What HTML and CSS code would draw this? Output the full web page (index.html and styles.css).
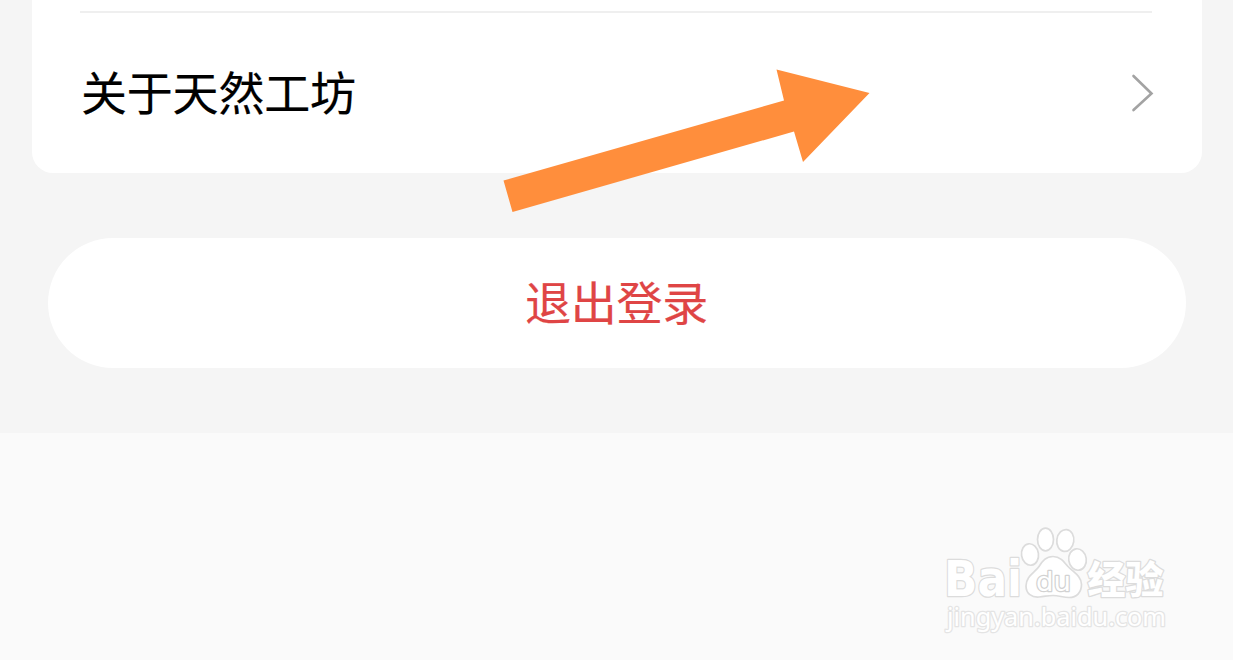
FILE: index.html
```html
<!DOCTYPE html>
<html lang="zh-CN">
<head>
  <meta charset="UTF-8" />
  <meta name="viewport" content="width=device-width, initial-scale=1" />
  <title>设置</title>
  <link rel="stylesheet" href="styles.css">
</head>
<body>
  <main class="settings">
    <div class="card">
      <a class="row" href="#">
        <span class="row-label">关于天然工坊</span>
        <svg class="chevron" width="24" height="40" viewBox="0 0 24 40" aria-hidden="true">
          <path d="M3.5 3 L21.5 20.5 L3.5 37" />
        </svg>
      </a>
    </div>
    <button class="logout-btn">退出登录</button>
  </main>

  <svg class="arrow" width="370" height="146" viewBox="0 0 370 146" aria-hidden="true">
    <path d="M3.5 112.5 L284 32.5 L276.5 1.5 L369.5 25 L303 94 L294 63.5 L12.5 144 Z" />
  </svg>

  <svg class="watermark" width="250" height="130" viewBox="0 0 250 130">
    <text class="wm-logo" x="14" y="81" textLength="78" lengthAdjust="spacingAndGlyphs">Bai</text>
    <ellipse cx="100" cy="39.5" rx="8.5" ry="10.8" transform="rotate(-8 100 39.5)" />
    <ellipse cx="115.5" cy="24.5" rx="8" ry="11.3" />
    <ellipse cx="135.3" cy="25.5" rx="8.5" ry="11" transform="rotate(8 135.3 25.5)" />
    <ellipse cx="147.5" cy="44.5" rx="8.8" ry="10.8" transform="rotate(-8 147.5 44.5)" />
    <path d="M123 41.5 C116 41.5 112.5 46 109 51.5 C105 57.5 96 61 96 71 C96 79 102 82.5 109 82 C115 81.5 118 80.5 123 80.5 C129 80.5 133 82.5 139 82.5 C147 82.5 151.5 77 151.5 69.5 C151.5 61 143 57 137.5 51 C133.5 46 130 41.5 123 41.5 Z" />
    <text class="wm-du" x="106" y="75.5" textLength="35" lengthAdjust="spacingAndGlyphs">du</text>
    <text class="wm-cn" x="157.5" y="77.5" textLength="76" lengthAdjust="spacingAndGlyphs">经验</text>
    <text class="wm-url" x="17" y="110.5" textLength="219" lengthAdjust="spacingAndGlyphs">jingyan.baidu.com</text>
  </svg>
</body>
</html>
```

FILE: styles.css
```css
body {
  font-family: "Noto Sans CJK SC", sans-serif;
  background: #fafafa;
  margin: 0;
  height: 660px;
  position: relative;
  overflow: hidden;
}
.settings {
  box-sizing: border-box;
  height: 433px;
  padding: 0 47px 0 48px;
  background: #f5f5f5;
}
.card {
  box-sizing: border-box;
  height: 173px;
  margin: 0 -16px;
  padding: 11px 50px 0 48px;
  background: #fff;
  border-radius: 0 0 21px 21px;
}
.row {
  display: flex;
  align-items: center;
  justify-content: space-between;
  height: 160px;
  border-top: 2px solid #efefef;
  color: #000;
  text-decoration: none;
}
.row-label {
  padding: 0 0 7px 1px;
  font-size: 46px;
  line-height: 60px;
  letter-spacing: -0.2px;
  -webkit-text-stroke: 0.2px #000;
}
.chevron {
  margin-right: -2px;
  fill: none;
  stroke: #a3a3a3;
  stroke-width: 2.6;
  stroke-linecap: round;
}
.logout-btn {
  display: block;
  width: 100%;
  height: 130px;
  margin-top: 65px;
  padding: 0 1px 6px 0;
  border: none;
  border-radius: 65px;
  background: #fff;
  color: #df4545;
  font-family: inherit;
  font-size: 46px;
  line-height: 60px;
  letter-spacing: -0.2px;
  -webkit-text-stroke: 0.2px #df4545;
  cursor: pointer;
}
.arrow {
  position: absolute;
  left: 500px;
  top: 68px;
  fill: #ff8e3c;
  pointer-events: none;
}
.watermark {
  position: absolute;
  left: 930px;
  top: 515px;
  fill: #fff;
  stroke: #dcdcdc;
  stroke-width: 1.7;
  pointer-events: none;
}
.watermark text {
  paint-order: stroke;
  stroke-width: 2.5;
  stroke-linejoin: round;
}
.wm-logo {
  font: bold 50px "DejaVu Sans", sans-serif;
}
.wm-du {
  font: 27px "DejaVu Sans", sans-serif;
  stroke: #d2d2d2;
}
.wm-cn {
  font: 900 38px "Noto Sans CJK SC", sans-serif;
}
.watermark .wm-url {
  font: 25px "Noto Sans", sans-serif;
  stroke: #e4e4e4;
}
```
